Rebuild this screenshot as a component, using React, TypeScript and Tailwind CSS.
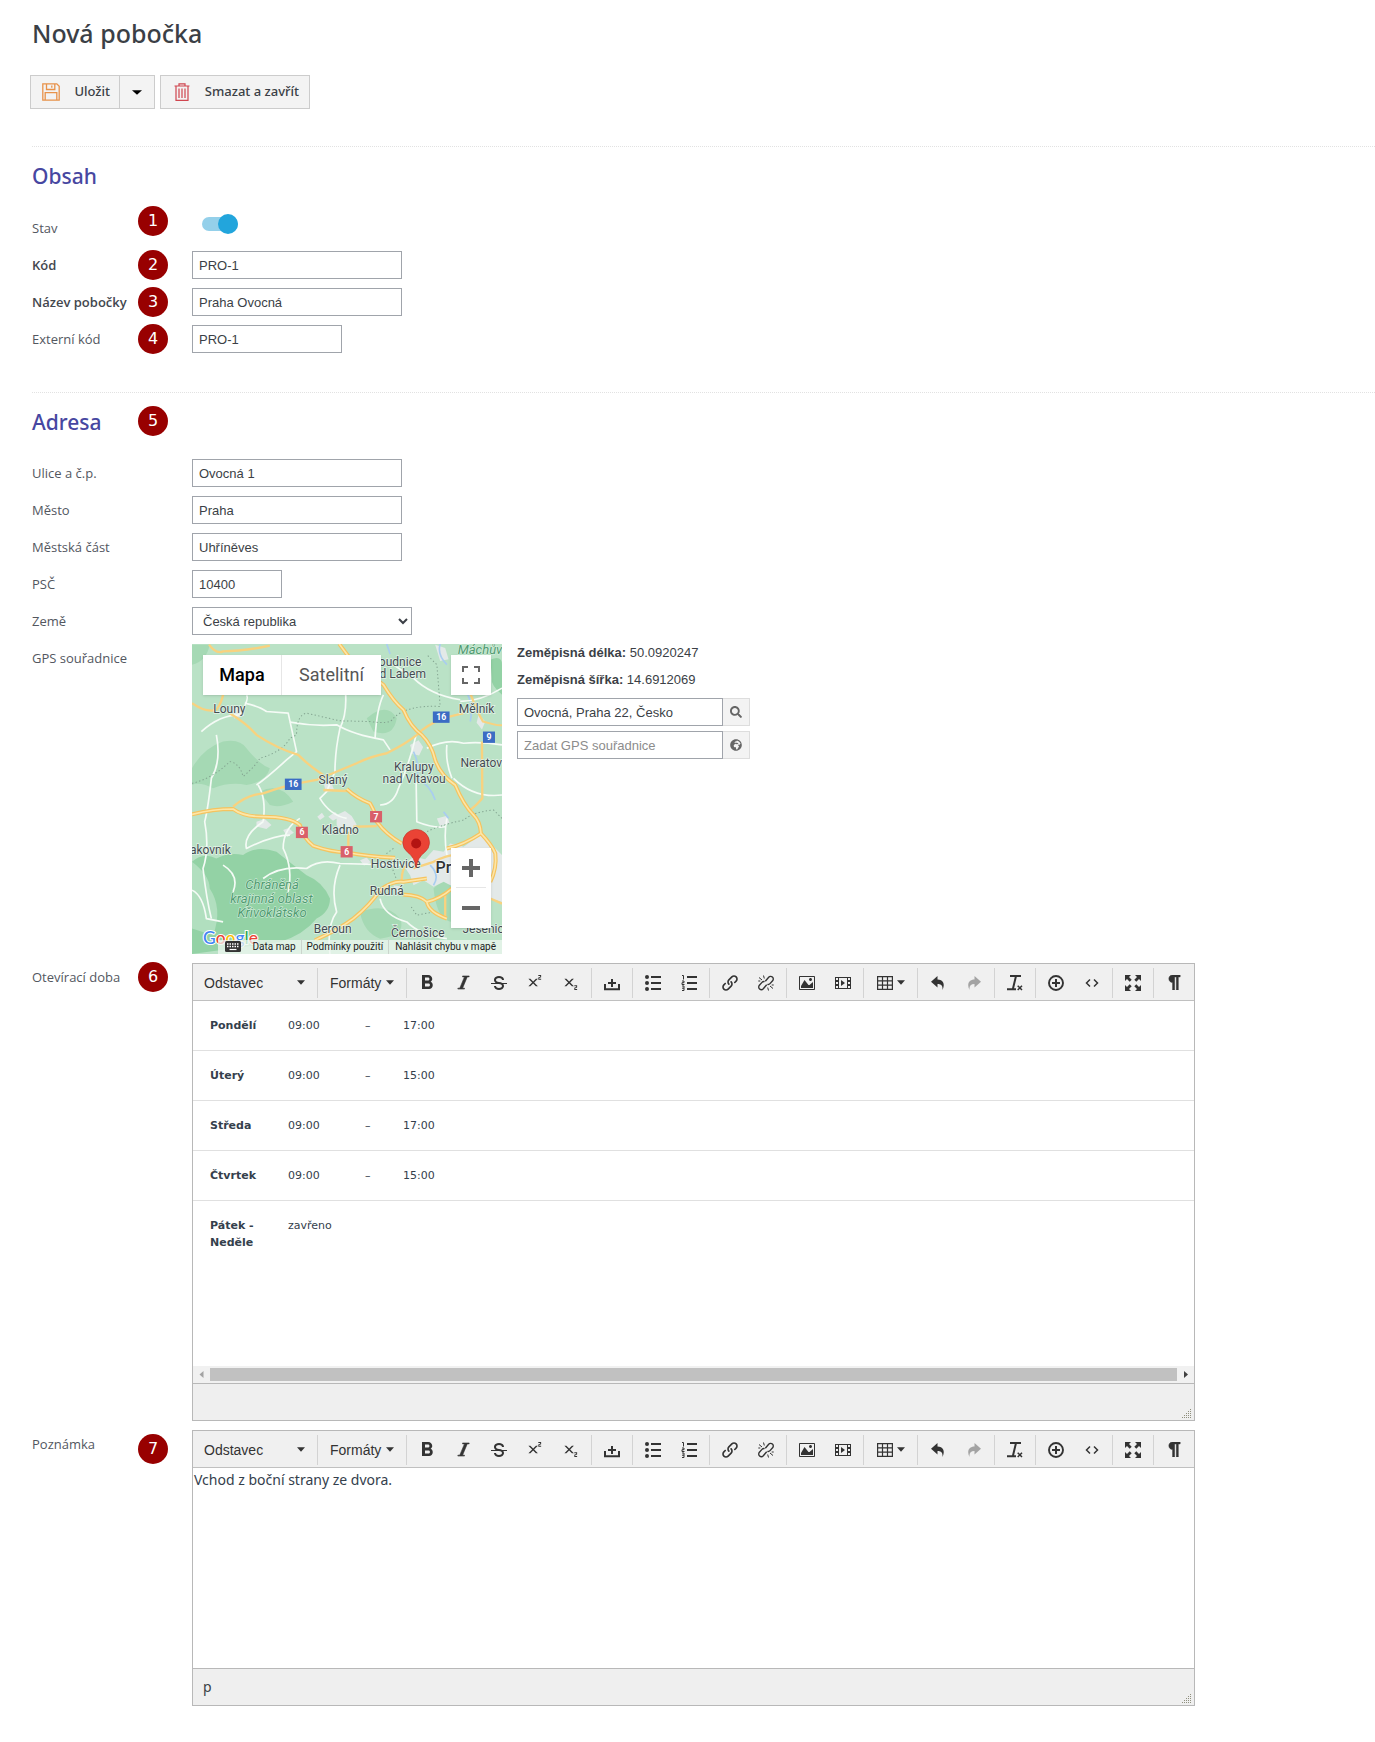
import { useState, type ReactNode } from "react";
import {
  ImItalic,
  ImLink,
  ImFilm,
  ImImage,
  ImSubscript,
  ImSuperscript,
  ImStrikethrough,
  ImPilcrow,
} from "react-icons/im";
import { MdFormatBold } from "react-icons/md";
import { FaSearch, FaGlobeAfrica } from "react-icons/fa";

const inputClass =
  "h-7 border border-[#a0a4ab] bg-white px-[6px] font-['Liberation_Sans',sans-serif] text-[13px] text-[#3b3f46] outline-none placeholder:text-[#8c8c8c]";

function Badge({ n, className = "" }: { n: number; className?: string }) {
  return (
    <span
      className={`flex size-[30px] shrink-0 items-center justify-center rounded-full bg-[#980000] font-['DejaVu_Sans',sans-serif] text-base text-white ${className}`}
    >
      {n}
    </span>
  );
}

type RowProps = {
  label: string;
  htmlFor?: string;
  badge?: number;
  badgeClass?: string;
  labelClass?: string;
  strong?: boolean;
  className?: string;
  children: ReactNode;
};

function Row({ label, htmlFor, badge, badgeClass = "-my-px", labelClass = "", strong, className = "", children }: RowProps) {
  return (
    <div className={`grid grid-cols-[106px_54px_minmax(0,1fr)] items-start ${className}`}>
      <label
        htmlFor={htmlFor}
        className={`flex h-7 items-center pt-[2px] whitespace-nowrap text-[13px] ${strong ? "font-semibold text-[#43474e]" : "text-[#53575f]"} ${labelClass}`}
      >
        {label}
      </label>
      <div className="flex h-full items-start">{badge && <Badge n={badge} className={badgeClass} />}</div>
      {children}
    </div>
  );
}

function TextRow({ id, value, width = "w-[210px]", ...row }: { id: string; value: string; width?: string } & Omit<RowProps, "children">) {
  return (
    <Row {...row} htmlFor={id}>
      <input id={id} defaultValue={value} className={`${inputClass} ${width}`} />
    </Row>
  );
}

function SaveIcon() {
  return (
    <svg width="18" height="18" viewBox="0 0 18 18" fill="none" stroke="#e8924a" strokeWidth="1.3">
      <path d="M.8 .8h14L17.2 3.200v14H.8z" />
      <path d="M4.500 1v5.500h8.300V1M9.800 2.500v2.300M3.200 17V9.700h11.600V17" />
    </svg>
  );
}

function TrashIcon() {
  return (
    <svg width="16" height="18" viewBox="0 0 16 18" fill="none" stroke="#d0454f" strokeWidth="1.2">
      <path d="M.5 3h15M5 3V.8h6V3M2 3v14.300h12V3M5 5.500v9.500M8 5.500v9.500M11 5.500v9.500" />
    </svg>
  );
}

function Caret({ size = 8 }: { size?: number }) {
  return (
    <svg width={size} height="5" viewBox="0 0 8 5" preserveAspectRatio="none" className="shrink-0 fill-current">
      <path d="M0 .3h8L4 4.700z" />
    </svg>
  );
}

/* ---- map ---- */

const majorRoads = [
  "M478 28 Q500 62 530 90 L610 150 Q640 200 670 225 Q690 275 725 300 Q755 330 765 375 Q780 420 825 450 Q850 510 880 540 Q900 560 902 595",
  "M37 538 Q100 522 160 522 Q190 545 250 545 Q330 545 360 570 Q370 610 400 632 Q450 650 500 652 Q560 664 645 668",
  "M500 462 Q530 490 570 505 Q590 540 590 560 Q620 600 665 625",
  "M902 595 Q850 630 800 640 M902 595 Q935 630 945 655 Q950 700 930 740",
  "M405 915 Q480 880 520 850 Q570 810 600 765 Q640 735 670 740 L740 730",
  "M668 778 Q720 780 740 800 Q745 830 800 850 M740 800 Q780 790 815 760",
];
const minorRoads = [
  "M88 30 Q110 60 130 50 Q190 50 270 33",
  "M37 205 Q80 235 110 225 Q125 205 130 180",
  "M150 235 Q200 265 230 300 Q290 340 355 360 Q390 395 430 420",
  "M160 515 Q200 480 250 475 Q320 450 410 435 Q470 410 530 385 Q570 365 620 355 Q680 325 710 300 Q740 270 790 250 L850 235",
  "M870 175 Q890 230 908 260 Q960 275 965 270",
  "M905 320 L906 490 Q890 510 870 525",
  "M430 465 L500 468 M520 575 L590 573 M505 590 L505 640",
  "M665 735 Q665 700 680 690 M700 700 L760 680 Q800 660 820 660",
  "M795 850 L795 780 M930 790 L965 805",
];
const lanes = [
  "M65 290 Q120 240 180 240 Q210 190 200 182 M195 205 Q240 215 260 230 L325 235 L350 350 L320 375 Q260 430 230 450",
  "M330 262 Q400 275 470 270 Q520 300 610 315 L630 345",
  "M497 180 Q500 240 480 280 Q465 350 465 410 L440 470 L420 490 Q450 540 500 550",
  "M610 180 Q590 220 585 310 M640 90 L700 130 Q750 180 840 195 M840 200 Q900 200 965 160",
  "M110 300 Q125 380 95 430 Q85 520 75 560 Q90 640 70 700 Q80 790 95 850",
  "M235 450 Q260 490 250 560 M360 550 Q310 580 310 640 Q340 700 325 770",
  "M708 300 Q690 380 655 460 Q640 510 600 510 M708 440 L710 560 Q760 580 795 575",
  "M740 340 Q800 310 850 325 Q900 320 965 330 M800 330 Q795 380 815 430",
  "M480 690 Q450 760 470 830 Q440 870 450 956 M37 765 Q70 780 80 850 L130 860 M130 690 Q180 720 160 770",
  "M665 690 L480 685 Q420 670 380 700 Q300 690 250 730 M600 790 Q610 840 680 860 Q720 900 800 910",
  "M820 430 Q880 490 965 480 M800 550 Q790 600 800 660 M250 560 Q190 600 200 640 Q280 600 330 600",
];

const places: [string, number, number][] = [
  ["oudnice", 660, 93],
  ["d Labem", 668, 129],
  ["Louny", 149, 234],
  ["Mělník", 889, 234],
  ["Kralupy", 701, 409],
  ["nad Vltavou", 702, 443],
  ["Neratov", 903, 397],
  ["Slaný", 459, 446],
  ["Kladno", 481, 597],
  ["akovník", 92, 657],
  ["Hostivice", 647, 699],
  ["Rudná", 620, 780],
  ["Beroun", 458, 894],
  ["Černošice", 713, 905],
  ["Jesenice", 918, 893],
];

const shields: [string, number, number, string][] = [
  ["16", 783, 247, "#3b6cc4"],
  ["9", 926, 307, "#3b6cc4"],
  ["16", 340, 448, "#3b6cc4"],
  ["7", 588, 545, "#d9606a"],
  ["6", 366, 592, "#d9606a"],
  ["6", 500, 650, "#d9606a"],
];

function MapCanvas() {
  return (
    <svg viewBox="37 28 928 928" className="block size-full font-[Roboto,sans-serif]">
      <rect x="37" y="28" width="928" height="928" fill="#bae2c6" />
      <g fill="#a5d9b4">
        <path d="M37 400Q70 340 130 320Q180 310 200 340Q240 390 270 400Q260 440 200 450Q150 440 100 460Q60 440 37 450z" />
        <path d="M240 470Q300 440 340 500Q300 520 270 510z M560 250Q620 200 650 250Q640 310 580 290z M540 830Q620 800 660 850Q680 900 600 910Q550 890 540 830z M37 30L90 30Q80 80 37 90z" />
        <path d="M760 760Q800 720 820 760V860Q770 860 760 760z" />
      </g>
      <g fill="#93d2a5">
        <path d="M37 680Q70 650 110 670Q150 650 190 660Q230 630 290 650Q340 690 380 720Q430 740 450 790Q450 830 410 850Q370 900 300 920L37 956z" />
        <path d="M930 75Q965 60 965 90V180Q930 150 935 130z" />
      </g>
      <path d="M37 680Q90 720 90 760Q130 820 100 900L37 880z" fill="#b1dfbf" />
      <g fill="#e3e9e8">
        <path d="M470 540l25-12 20 15 15 25-20 30-30-5-10-25zM412 545l14-12 8 12-14 10zM445 545l20-14 14 14-20 12zM230 560l25-8 20 18-15 12-30-8zM310 585l16-6 16 14-20 12z" />
        <path d="M670 690L700 665L735 672L760 645L790 650L810 625L850 635L900 600L925 620L965 660V800L930 790L900 820L860 780L830 760L790 740L760 755L730 735L700 750L690 720Z" />
        <path d="M690 330l25-14 14 20-12 26-20-5zM155 215l30 6 8 22-30 8zM895 240l20 20-10 24-16-20zM430 440l25 5 8 22-25 4zM470 870l24 10-14 20zM765 30l30 10 10 34-25 5zM770 550l30-8 8 22-28 10zM540 675l20-8 12 14-20 10zM640 750l24 4 4 18-22 4z" />
      </g>
      <g fill="none" stroke="#a9cdf0" strokeWidth="5">
        <path d="M700 350Q720 390 710 430Q750 450 765 495M780 28Q770 60 800 90M860 175Q880 210 870 260M790 530l15 20M750 690Q780 720 760 750M620 28l10 30" />
      </g>
      <g fill="none" stroke="#f5fbf6" strokeWidth="5" strokeLinejoin="round">
        {lanes.map((d) => (
          <path key={d} d={d} />
        ))}
      </g>
      <g fill="none" stroke="#83a490" strokeWidth="3" strokeDasharray="4 7">
        <path d="M37 445Q100 430 150 380Q180 385 190 425Q230 390 240 370Q310 350 330 310L350 300Q350 240 380 235L480 258L570 260Q630 270 640 250Q680 210 780 215L770 90L740 60" />
        <path d="M965 550L940 525Q880 530 850 555Q780 570 740 590M640 640L620 655L650 735M760 830L710 840L690 810" />
      </g>
      <g fill="none" stroke="#f8d27f" strokeWidth="7">
        {minorRoads.map((d) => (
          <path key={d} d={d} />
        ))}
      </g>
      <g fill="none" stroke="#f5c35f" strokeWidth="12" strokeLinejoin="round">
        {majorRoads.map((d) => (
          <path key={d} d={d} />
        ))}
      </g>
      <g fill="none" stroke="#fde6a6" strokeWidth="5" strokeLinejoin="round">
        {majorRoads.map((d) => (
          <path key={d} d={d} />
        ))}
      </g>
      {shields.map(([n, x, y, color]) => (
        <g key={`${n}-${x}`}>
          <rect x={x - (n.length > 1 ? 25 : 18)} y={y - 17} width={n.length > 1 ? 50 : 36} height="34" fill={color} />
          <text x={x} y={y + 9} textAnchor="middle" fontSize="26" fontWeight="700" fill="#fff">
            {n}
          </text>
        </g>
      ))}
      <g fontSize="36" textAnchor="middle" fill="#444c52" stroke="#e4f3e8" strokeWidth="4" paintOrder="stroke">
        {places.map(([name, x, y]) => (
          <text key={name} x={x} y={y}>
            {name}
          </text>
        ))}
      </g>
      <text x="766" y="713" fontSize="48" fontWeight="500" fill="#2f3336" stroke="#fff" strokeWidth="3" paintOrder="stroke">
        Praha
      </text>
      <g fontSize="39" fontStyle="italic" textAnchor="middle" fill="#4f9a70" stroke="#d9f0e0" strokeWidth="3" paintOrder="stroke">
        <text x="277" y="761">Chráněná</text>
        <text x="275" y="803">krajinná oblast</text>
        <text x="277" y="845">Křivoklátsko</text>
        <text x="899" y="59">Máchův</text>
      </g>
      <path d="M708 698Q703 665 683 652Q668 640 668 623A40 40 0 0 1 748 623Q748 640 733 652Q713 665 708 698z" fill="#ea4335" stroke="#c5352a" strokeWidth="2" />
      <circle cx="708" cy="625" r="15" fill="#b31412" />
      <text x="70" y="927" fontSize="52" fontWeight="500" stroke="#fff" strokeWidth="6" paintOrder="stroke" fontFamily="Lato, sans-serif">
        <tspan fill="#4285f4">G</tspan>
        <tspan fill="#ea4335">o</tspan>
        <tspan fill="#fbbc05">o</tspan>
        <tspan fill="#4285f4">g</tspan>
        <tspan fill="#34a853">l</tspan>
        <tspan fill="#ea4335">e</tspan>
      </text>
    </svg>
  );
}

function MapWidget() {
  return (
    <div className="relative size-[310px] shrink-0 overflow-hidden font-[Roboto,sans-serif]">
      <MapCanvas />
      <div className="absolute left-[11px] top-[11px] flex h-10 bg-white text-lg shadow-sm">
        <button type="button" className="w-[79px] border-r border-[#e6e6e6] font-medium text-black">
          Mapa
        </button>
        <button type="button" className="w-[99px] text-[#565656]">
          Satelitní
        </button>
      </div>
      <button type="button" aria-label="Celá obrazovka" className="absolute right-[11px] top-[11px] flex size-10 items-center justify-center bg-white shadow-sm">
        <svg width="18" height="18" viewBox="0 0 18 18" fill="none" stroke="#666" strokeWidth="2">
          <path d="M1 6V1h5M12 1h5v5M17 12v5h-5M6 17H1v-5" />
        </svg>
      </button>
      <div className="absolute bottom-[26px] right-[11px] flex w-10 flex-col bg-white px-[5px] shadow-sm">
        <button type="button" aria-label="Přiblížit" className="flex h-10 items-center justify-center border-b border-[#e6e6e6]">
          <svg width="18" height="18" viewBox="0 0 18 18" fill="#666">
            <path d="M7 0h4v7h7v4h-7v7H7v-7H0V7h7z" />
          </svg>
        </button>
        <button type="button" aria-label="Oddálit" className="flex h-10 items-center justify-center">
          <svg width="18" height="4" viewBox="0 0 18 4" fill="#666">
            <path d="M0 0h18v4H0z" />
          </svg>
        </button>
      </div>
      <div className="absolute bottom-0 right-0 flex h-[14px] items-center bg-[#edf7f0]/75 pb-px text-[10px] text-[#1c1c1c]">
        <span className="px-[7px]">
          <svg width="16" height="11" viewBox="0 0 16 11">
            <rect width="16" height="11" rx="1.5" fill="#333" />
            <path d="M2 3h12M2 5.500h12" stroke="#fff" strokeWidth="1.400" strokeDasharray="1.500 1" />
            <path d="M4.500 8.500h7" stroke="#fff" strokeWidth="1.200" />
          </svg>
        </span>
        <span className="px-[5px]">Data map</span>
        <a href="#podminky" className="border-l border-[#cbd5cd] px-[5px]">
          Podmínky použití
        </a>
        <a href="#chyba" className="border-l border-[#cbd5cd] px-[6px]">
          Nahlásit chybu v mapě
        </a>
      </div>
    </div>
  );
}

/* ---- rich text editor ---- */

function Ico({ children }: { children: ReactNode }) {
  return (
    <svg width="16" height="16" viewBox="0 0 16 16" fill="none" stroke="currentColor" strokeWidth="1.5">
      {children}
    </svg>
  );
}

const UploadIcon = () => (
  <Ico>
    <path d="M1 9v5.200h14V9" strokeWidth="2" />
    <path d="M8 4v8M4 8h8" strokeWidth="2" />
  </Ico>
);
const BulletIcon = () => (
  <Ico>
    <path d="M6 2h10M6 8h10M6 14h10" strokeWidth="2" />
    <g fill="currentColor" stroke="none">
      <circle cx="2" cy="2" r="2" />
      <circle cx="2" cy="8" r="2" />
      <circle cx="2" cy="14" r="2" />
    </g>
  </Ico>
);
const NumberIcon = () => (
  <Ico>
    <path d="M6 2h10M6 8h10M6 14h10" strokeWidth="2" />
    <path d="M1 .5h1.500V4.500M1 6h2v1.700H1V9.500h2.500M1 11h2v4.500H1M1 13.200h2" strokeWidth="1" />
  </Ico>
);
const UnlinkIcon = () => (
  <Ico>
    <path
      d="M7.300 6.200l3.400-4a2.600 2.600 0 0 1 3.900 3.500L12 8.600a2.600 2.600 0 0 1-2.600.8M8.700 9.800l-3.400 4a2.600 2.600 0 0 1-3.900-3.500L4 7.400a2.600 2.600 0 0 1 2.600-.8"
      strokeWidth="1.400"
    />
    <path d="M1 2.500l3 2.500M5.500 .5l.8 3M.3 6h2M15 13.500L12 11M10.500 15.500l-.8-3M15.700 10h-2" strokeWidth="1" />
  </Ico>
);
const TableIcon = () => (
  <Ico>
    <path d="M.6 1.600h14.800v12.800H.6zM.6 5.800h14.800M.6 10.100h14.800M5.500 1.600v12.800M10.500 1.600v12.800" strokeWidth="1.200" />
  </Ico>
);
const UndoIcon = () => (
  <Ico>
    <path d="M7.500 1v3.500c5.500 0 8 4.500 5 10.500.4-4-1-6-5-6V12.500L1 6.700z" fill="currentColor" stroke="none" />
  </Ico>
);
const RedoIcon = () => (
  <Ico>
    <path d="M8.500 1v3.500c-5.500 0-8 4.500-5 10.500-.4-4 1-6 5-6V12.500L15 6.700z" fill="currentColor" stroke="none" />
  </Ico>
);
const ClearIcon = () => (
  <Ico>
    <path d="M3 1h11M9 1L6 13.500M0 14.200h9" strokeWidth="2" />
    <path d="M10.700 10.700l4.300 4.300M15 10.700L10.700 15" strokeWidth="1.500" />
  </Ico>
);
const PlusCircleIcon = () => (
  <Ico>
    <circle cx="8" cy="8" r="7" strokeWidth="1.900" />
    <path d="M8 4v8M4 8h8" strokeWidth="2" />
  </Ico>
);
const CodeIcon = () => (
  <Ico>
    <path d="M6 4.500L2.500 8 6 11.500M10 4.500L13.500 8 10 11.500" />
  </Ico>
);
const FullscreenIcon = () => (
  <Ico>
    <path
      d="M0 0h6L4 2l2.700 2.700-2 2L2 4 0 6zM16 0v6l-2-2-2.700 2.700-2-2L12 2l-2-2zM16 16h-6l2-2-2.700-2.700 2-2L14 12l2-2zM0 16v-6l2 2 2.700-2.700 2 2L4 14l2 2z"
      fill="currentColor"
      stroke="none"
    />
  </Ico>
);

type Tool = { title: string; icon: ReactNode; menu?: boolean; off?: boolean };

const toolGroups: Tool[][] = [
  [
    { title: "Tučné", icon: <MdFormatBold size={24} /> },
    { title: "Kurzíva", icon: <ImItalic size={15} strokeWidth={0.6} stroke="currentColor" /> },
    { title: "Přeškrtnuté", icon: <ImStrikethrough size={16} /> },
    { title: "Horní index", icon: <ImSuperscript size={15} /> },
    { title: "Dolní index", icon: <ImSubscript size={15} /> },
  ],
  [{ title: "Nahrát", icon: <UploadIcon /> }],
  [
    { title: "Odrážky", icon: <BulletIcon /> },
    { title: "Číslování", icon: <NumberIcon /> },
  ],
  [
    { title: "Odkaz", icon: <ImLink size={16} /> },
    { title: "Zrušit odkaz", icon: <UnlinkIcon /> },
  ],
  [
    { title: "Obrázek", icon: <ImImage size={16} /> },
    { title: "Video", icon: <ImFilm size={16} /> },
  ],
  [{ title: "Tabulka", icon: <TableIcon />, menu: true }],
  [
    { title: "Zpět", icon: <UndoIcon /> },
    { title: "Znovu", icon: <RedoIcon />, off: true },
  ],
  [{ title: "Zrušit formátování", icon: <ClearIcon /> }],
  [
    { title: "Vložit", icon: <PlusCircleIcon /> },
    { title: "Zdrojový kód", icon: <CodeIcon /> },
  ],
  [{ title: "Na celou obrazovku", icon: <FullscreenIcon /> }],
  [{ title: "Netisknutelné znaky", icon: <ImPilcrow size={15} strokeWidth={0.6} stroke="currentColor" /> }],
];

function Toolbar() {
  return (
    <div className="flex h-[37px] items-center overflow-hidden border-b border-[#c0c0c0] bg-[#f0f0f0] pt-px text-sm text-[#333]">
      <button type="button" className="flex h-[30px] w-[125px] shrink-0 items-center justify-between border-r border-[#d3d3d3] pl-[11px] pr-3">
        Odstavec <Caret />
      </button>
      <button type="button" className="flex h-[30px] w-[89px] shrink-0 items-center justify-between border-r border-[#d3d3d3] px-3">
        Formáty <Caret />
      </button>
      {toolGroups.map((group, i) => (
        <div key={i} className="flex h-[30px] shrink-0 border-r border-[#d3d3d3] px-[2px] last:border-r-0">
          {group.map((t) => (
            <button
              key={t.title}
              type="button"
              title={t.title}
              disabled={t.off}
              className={`flex h-[30px] items-center justify-center ${t.menu ? "w-[49px] gap-1" : "w-9"} ${t.off ? "opacity-40" : ""}`}
            >
              {t.icon}
              {t.menu && <Caret />}
            </button>
          ))}
        </div>
      ))}
    </div>
  );
}

function Editor({ path, children }: { path?: string; children: ReactNode }) {
  return (
    <div className="w-full max-w-[1003px] border border-[#b8b8b8] bg-white font-['Liberation_Sans',sans-serif]">
      <Toolbar />
      {children}
      <div className="flex h-[37px] items-center justify-between border-t border-[#b8b8b8] bg-[#efefef] pl-[10px] pr-[2px]">
        <span className="font-['Noto_Sans',sans-serif] text-sm text-[#3b3f46]">{path}</span>
        <svg width="10" height="9" viewBox="0 0 10 9" className="mb-[2px] self-end" stroke="#8f8f7d" strokeDasharray="1 1">
          <path d="M8 .5h2M6 2.500h4M4 4.500h6M2 6.500h8M0 8.500h10" />
        </svg>
      </div>
    </div>
  );
}

const hours = [
  { day: "Pondělí", from: "09:00", to: "17:00" },
  { day: "Úterý", from: "09:00", to: "15:00" },
  { day: "Středa", from: "09:00", to: "17:00" },
  { day: "Čtvrtek", from: "09:00", to: "15:00" },
  { day: "Pátek - Neděle", from: "zavřeno" },
];

function HoursTable() {
  return (
    <table className="w-full table-fixed border-collapse font-['DejaVu_Sans',Verdana,sans-serif] text-[11px] leading-[17px] text-[#34404c]">
      <tbody>
        {hours.map((h) => (
          <tr key={h.day} className="border-b border-[#e0e0e0] align-top last:border-b-0">
            <th className="w-[95px] py-4 pl-[17px] pr-4 text-left font-bold">{h.day}</th>
            <td className="w-[77px] py-4">{h.from}</td>
            <td className="w-[38px] py-4">{h.to && "–"}</td>
            <td className="py-4">{h.to}</td>
          </tr>
        ))}
      </tbody>
    </table>
  );
}

function ScrollBar() {
  return (
    <div className="flex h-[17px] items-center bg-[#f1f1f1]">
      <svg width="17" height="17" viewBox="0 0 17 17" fill="#a3a3a3">
        <path d="M10.500 5v7l-4-3.500z" />
      </svg>
      <div className="h-[13px] flex-1 bg-[#c1c1c1]" />
      <svg width="17" height="17" viewBox="0 0 17 17" fill="#404040">
        <path d="M7 5v7l4-3.500z" />
      </svg>
    </div>
  );
}

export default function App() {
  const [active, setActive] = useState(true);

  return (
    <div className="min-h-screen bg-white pb-9 pl-[30px] font-['Open_Sans','Noto_Sans',sans-serif] text-[#3b3f46]">
      <h1 className="ml-[2px] pt-[15px] font-['Noto_Sans',sans-serif] text-[25px] leading-9 font-medium">Nová pobočka</h1>

      <div className="mt-6 flex gap-[5px] font-['Noto_Sans',sans-serif] text-[13px] font-medium">
        <div className="flex h-[34px] border border-[#ccc] bg-[#f3f3f3]">
          <button type="button" className="flex w-[89px] items-center justify-between border-r border-[#ccc] pl-[11px] pr-[9px]">
            <SaveIcon />
            Uložit
          </button>
          <button type="button" aria-label="Další možnosti uložení" className="flex w-[34px] items-center justify-center text-black">
            <Caret size={10} />
          </button>
        </div>
        <button type="button" className="flex h-[34px] w-[150px] items-center justify-between border border-[#ccc] bg-[#f3f3f3] pl-[13px] pr-[10px]">
          <TrashIcon />
          Smazat a zavřít
        </button>
      </div>

      <div className="ml-[2px]">
        <section className="mt-[37px] border-t border-dotted border-[#e2e2e2] pt-[13px]">
          <h2 className="font-['Noto_Sans',sans-serif] text-[21px] leading-8 font-medium text-[#4747a1]">Obsah</h2>
          <div className="mt-[14px] flex flex-col gap-[9px]">
            <Row label="Stav" htmlFor="stav" badge={1} badgeClass="" labelClass="self-end" className="h-9">
              <div className="ml-[10px] flex self-center">
                <input
                  id="stav"
                  type="checkbox"
                  role="switch"
                  checked={active}
                  onChange={(e) => setActive(e.target.checked)}
                  className="peer sr-only"
                />
                <label
                  htmlFor="stav"
                  className="flex h-[14px] w-9 items-center rounded-full bg-[#c8c8c8] peer-checked:justify-end peer-checked:bg-[#94d0ea] [&>span]:bg-[#999] peer-checked:[&>span]:bg-[#22a5dc]"
                >
                  <span className="size-5 rounded-full" />
                </label>
              </div>
            </Row>
            <TextRow id="kod" label="Kód" strong badge={2} value="PRO-1" />
            <TextRow id="nazev" label="Název pobočky" strong badge={3} value="Praha Ovocná" />
            <TextRow id="externi" label="Externí kód" badge={4} value="PRO-1" width="w-[150px]" />
          </div>
        </section>

        <section className="mt-[39px] border-t border-dotted border-[#e2e2e2] pt-[13px]">
          <div className="grid grid-cols-[106px_54px] items-start">
            <h2 className="font-['Noto_Sans',sans-serif] text-[21px] leading-8 font-medium text-[#4747a1]">Adresa</h2>
            <Badge n={5} />
          </div>
          <div className="mt-[21px] flex flex-col gap-[9px]">
            <TextRow id="ulice" label="Ulice a č.p." value="Ovocná 1" />
            <TextRow id="mesto" label="Město" value="Praha" />
            <TextRow id="cast" label="Městská část" value="Uhříněves" />
            <TextRow id="psc" label="PSČ" value="10400" width="w-[90px]" />
            <Row label="Země" htmlFor="zeme">
              <select id="zeme" className={`${inputClass} w-[220px]`} defaultValue="cz">
                <option value="cz">Česká republika</option>
                <option value="sk">Slovensko</option>
              </select>
            </Row>
            <Row label="GPS souřadnice" htmlFor="adresa-hledat">
              <div className="flex gap-[15px]">
                <MapWidget />
                <div className="w-[233px] font-['Liberation_Sans',sans-serif] text-[13px]">
                  <p className="h-[27px] pt-px leading-4">
                    <b>Zeměpisná délka:</b> 50.0920247
                  </p>
                  <p className="h-[27px] pt-px leading-4">
                    <b>Zeměpisná šířka:</b> 14.6912069
                  </p>
                  <div className="flex flex-col gap-[5px]">
                    <div className="flex">
                      <input id="adresa-hledat" defaultValue="Ovocná, Praha 22, Česko" className={`${inputClass} min-w-0 flex-1`} />
                      <button type="button" aria-label="Hledat adresu" className="flex w-[27px] items-center justify-center border border-l-0 border-[#ddd] bg-[#f3f3f3] text-[#666]">
                        <FaSearch size={12} />
                      </button>
                    </div>
                    <div className="flex">
                      <input aria-label="GPS souřadnice" placeholder="Zadat GPS souřadnice" className={`${inputClass} min-w-0 flex-1`} />
                      <button type="button" aria-label="Najít souřadnice" className="flex w-[27px] items-center justify-center border border-l-0 border-[#ddd] bg-[#f3f3f3] text-[#666]">
                        <FaGlobeAfrica size={12} />
                      </button>
                    </div>
                  </div>
                </div>
              </div>
            </Row>
            <Row label="Otevírací doba" badge={6}>
              <Editor>
                <div className="h-[365px] overflow-hidden">
                  <HoursTable />
                </div>
                <ScrollBar />
              </Editor>
            </Row>
            <Row label="Poznámka" badge={7} badgeClass="mt-1">
              <Editor path="p">
                <div className="h-[200px] px-px text-[#34404c]">
                  <p className="font-['Noto_Sans',sans-serif] text-sm leading-6">Vchod z boční strany ze dvora.</p>
                </div>
              </Editor>
            </Row>
          </div>
        </section>
      </div>
    </div>
  );
}
